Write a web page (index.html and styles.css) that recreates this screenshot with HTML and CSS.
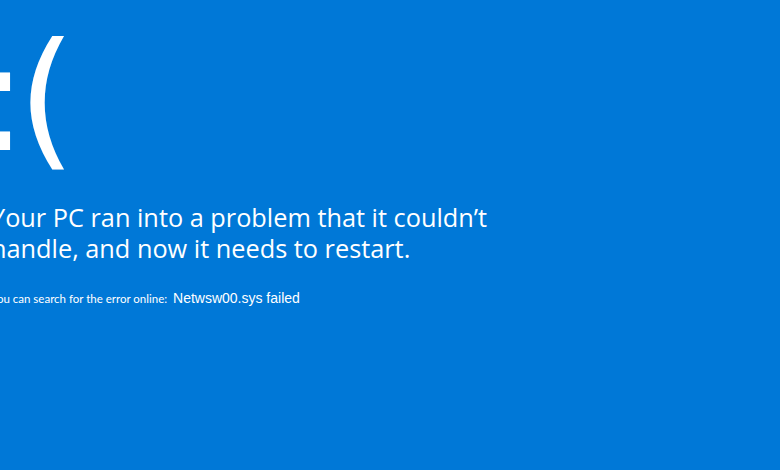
FILE: index.html
```html
<!DOCTYPE html>
<html>
<head>
<meta charset="utf-8">
<link rel="stylesheet" href="styles.css">
</head>
<body>
<main class="screen">
  <div class="face">:(</div>
  <p class="message">Your PC ran into a problem that it couldn’t<br>handle, and now it needs to restart.</p>
  <p class="detail">You can search for the error online:&nbsp; <span class="code">Netwsw00.sys failed</span></p>
</main>
</body>
</html>
```
FILE: styles.css
```css
html, body {
  margin: 0;
  padding: 0;
  width: 780px;
  height: 470px;
  overflow: hidden;
  background: #0078d7;
}
.screen {
  display: flex;
  flex-direction: column;
  margin-left: -9px;
  color: #ffffff;
  font-family: "Open Sans", "Noto Sans", sans-serif;
}
.face {
  font-family: "DejaVu Sans", sans-serif;
  font-weight: 400;
  font-size: 150px;
  line-height: 196px;
  height: 202px;
  margin-left: -14px;
  letter-spacing: -10px;
}
.message {
  margin: 0;
  font-size: 25.3px;
  line-height: 31px;
}
.detail {
  margin: 26px 0 0 0;
  font-family: "Lato", "Open Sans", sans-serif;
  font-size: 11.5px;
}
.code {
  font-family: "Liberation Sans", Arial, sans-serif;
  font-size: 14px;
}
```
